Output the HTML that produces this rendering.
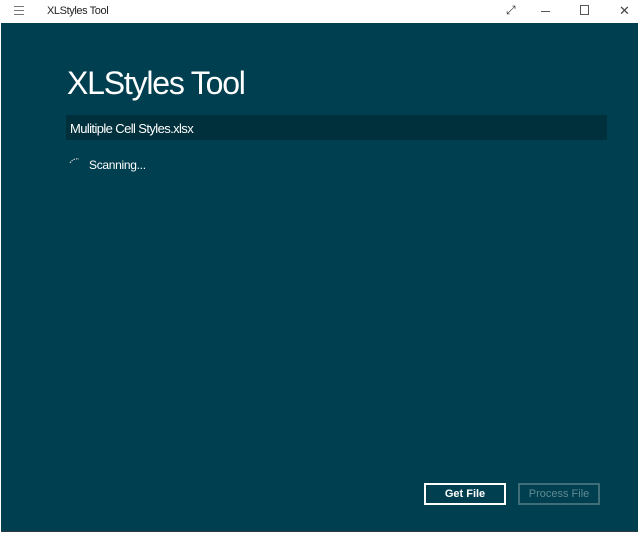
<!DOCTYPE html>
<html><head><style>
*{margin:0;padding:0;box-sizing:border-box}
body{width:640px;height:533px;background:#fff;font-family:"Liberation Sans",sans-serif;position:relative;overflow:hidden}
.tb{position:absolute;left:0;top:0;width:640px;height:23px;background:#fff;font-size:11px;color:#222}
.main{position:absolute;left:1px;top:23px;width:637px;height:509px;background:#003f4f;border-bottom:1px solid #2a3a40}
.abs{position:absolute}
</style></head><body>
<div class="tb">
 <div class="abs" style="left:14px;top:6px;width:10px;height:9px;border-top:1px solid #777;border-bottom:1px solid #777"><div style="margin-top:3px;border-top:1px solid #777"></div></div>
 <div class="abs" style="left:47px;top:5px;letter-spacing:-0.4px">XLStyles Tool</div>
 <div class="abs" style="left:506px;top:3px;font-size:12px;color:#333">&#x2922;</div>
 <div class="abs" style="left:541px;top:11px;width:9px;border-top:1px solid #555"></div>
 <div class="abs" style="left:580px;top:5px;width:9px;height:10px;border:1px solid #555"></div>
 <div class="abs" style="left:619px;top:3px;font-size:13px;color:#444">✕</div>
</div>
<div class="main">
 <div class="abs" style="left:66px;top:42px;font-size:32px;color:#fff;letter-spacing:-1.2px">XLStyles Tool</div>
 <div class="abs" style="left:65px;top:92px;width:541px;height:25px;background:#00303c;color:#fff;font-size:13px;padding:6px 0 0 4px;letter-spacing:-0.6px">Mulitiple Cell Styles.xlsx</div>
 <svg class="abs" style="left:68px;top:134px" width="14" height="8"><path d="M1 6 Q4 1 10 2" stroke="#ccc" stroke-width="1.2" fill="none" stroke-dasharray="1.5 1"/></svg>
 <div class="abs" style="left:88px;top:135px;color:#fff;font-size:12px;letter-spacing:-0.3px">Scanning...</div>
 <div class="abs" style="left:423px;top:460px;width:82px;height:22px;border:2px solid #fff;color:#fff;font-size:11px;font-weight:bold;text-align:center;line-height:18px">Get File</div>
 <div class="abs" style="left:517px;top:460px;width:82px;height:22px;border:2px solid #3f6e78;color:#5f8a93;font-size:11px;text-align:center;line-height:18px">Process File</div>
</div>
</body></html>
